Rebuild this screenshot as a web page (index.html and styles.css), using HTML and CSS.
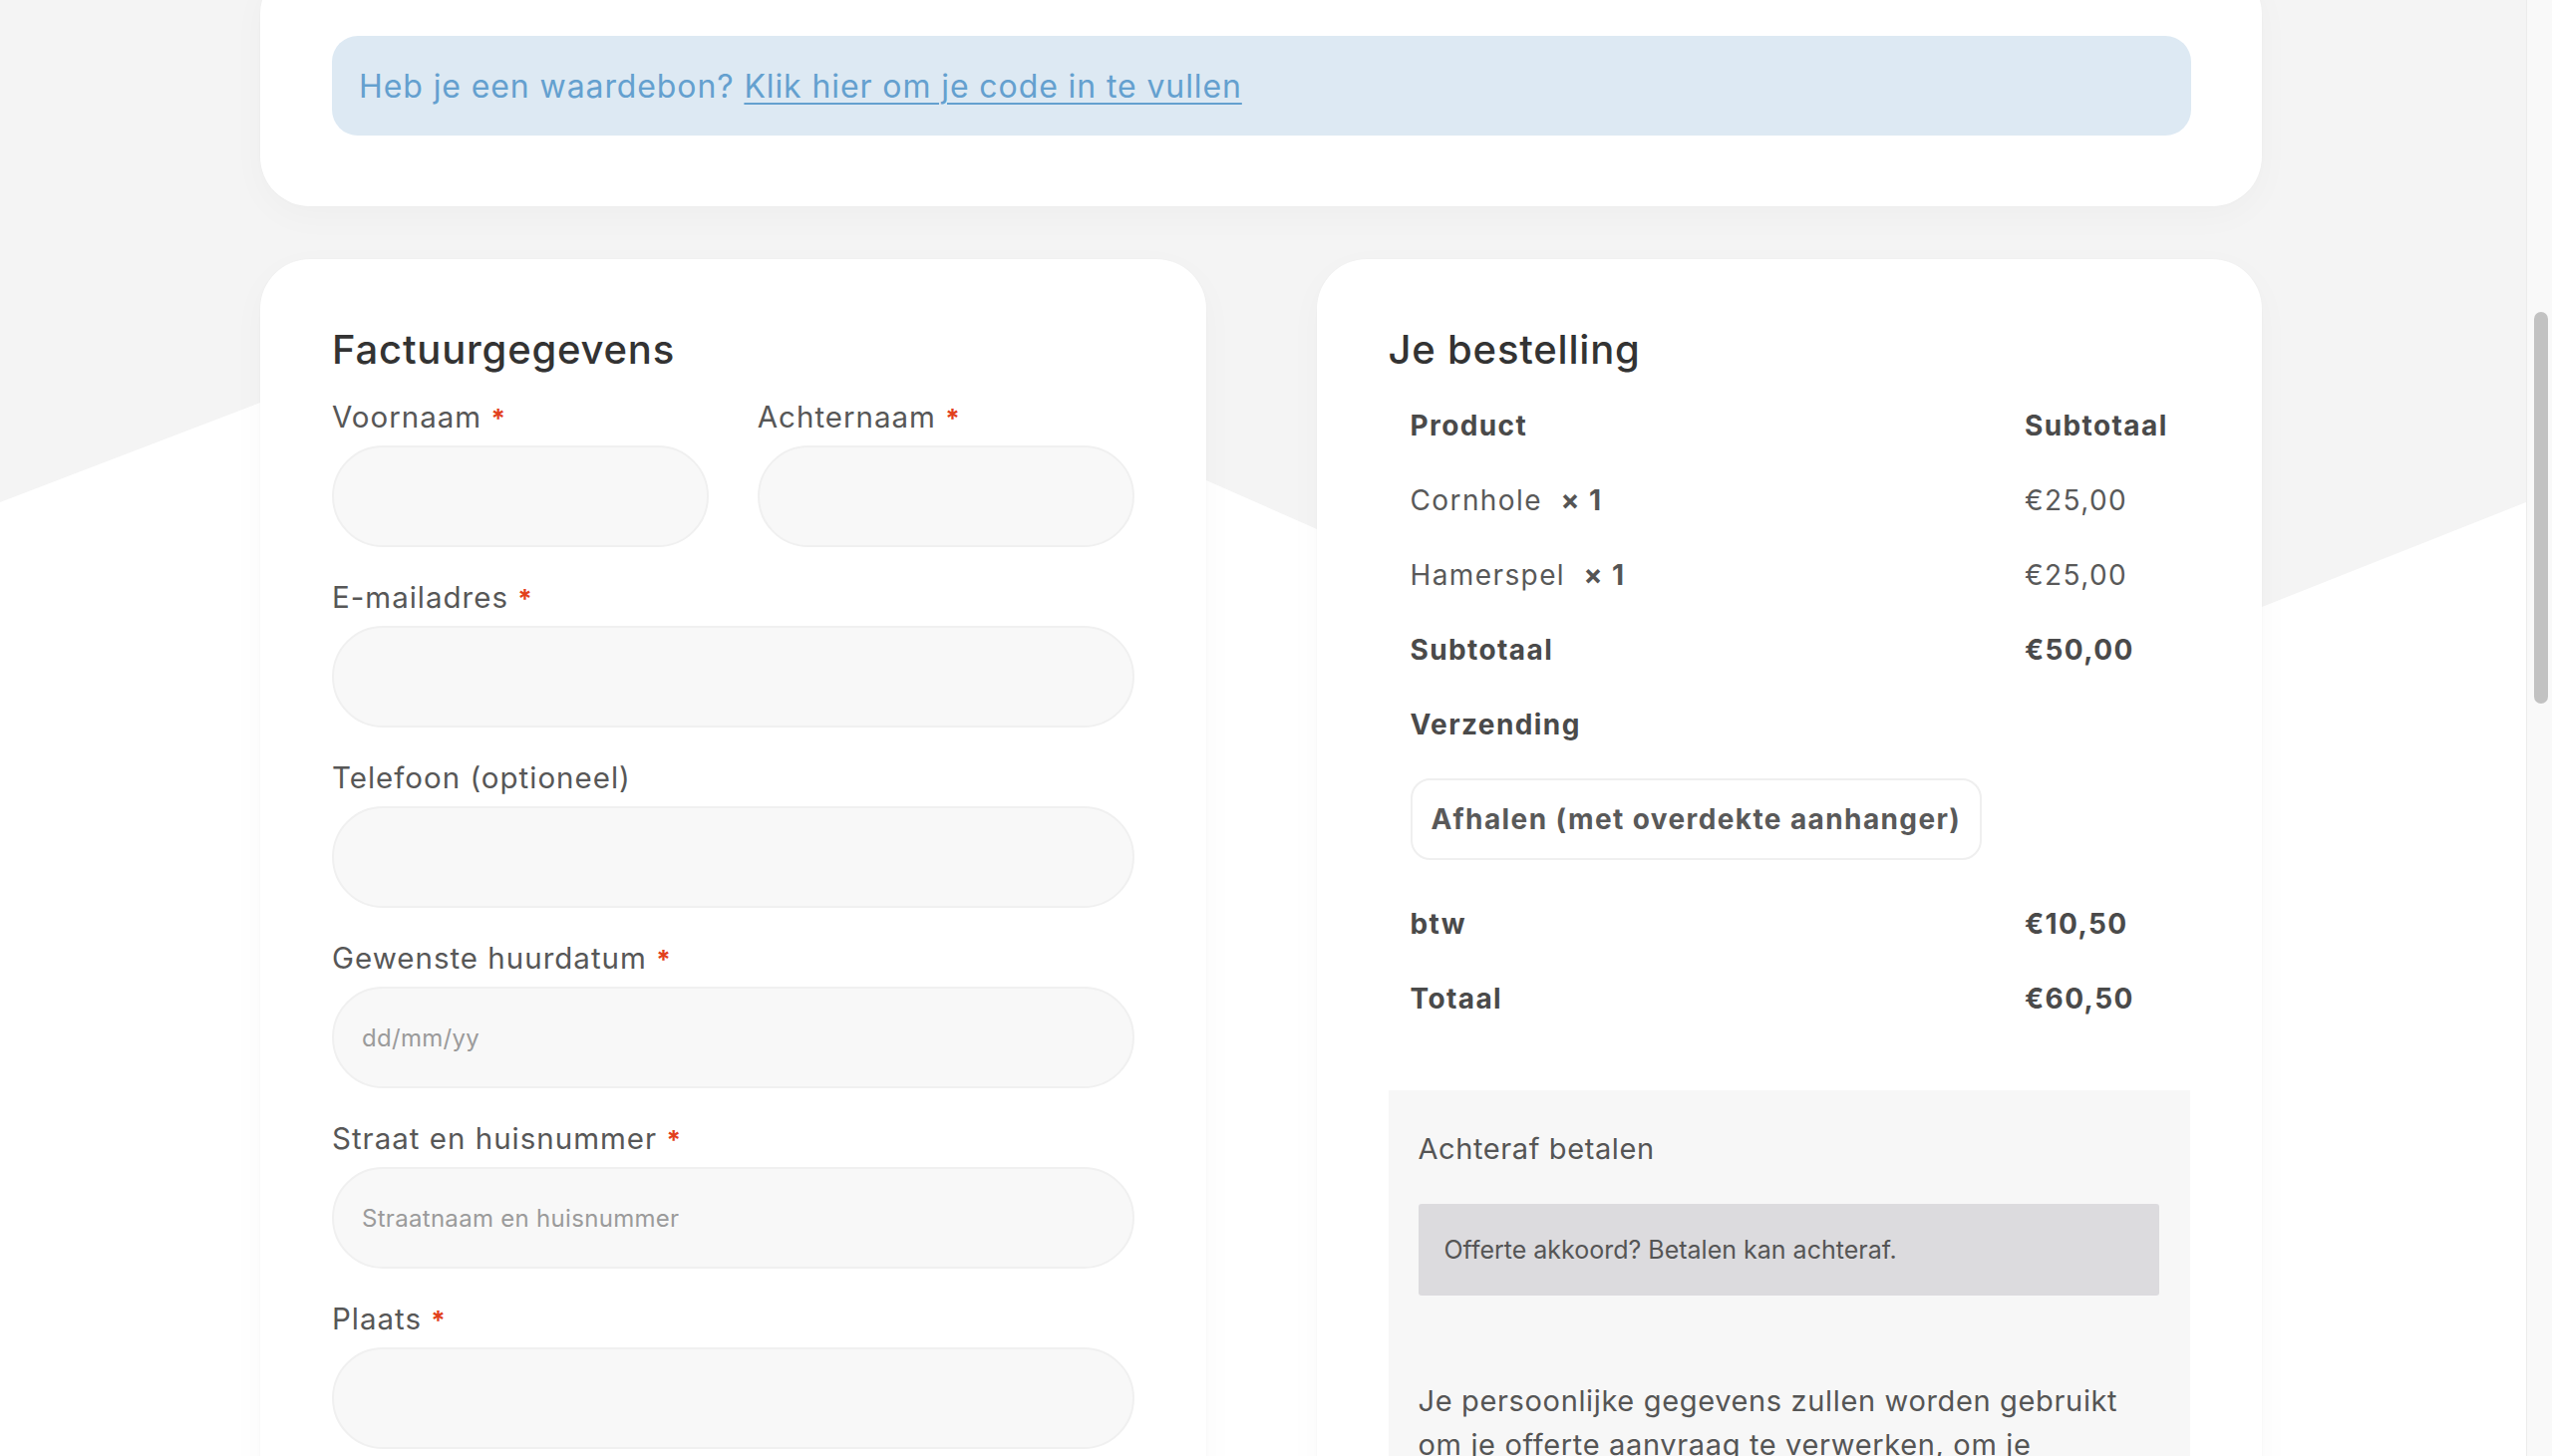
FILE: index.html
```html
<!DOCTYPE html>
<html lang="nl">
<head>
<meta charset="utf-8">
<title>Afrekenen</title>
<link rel="stylesheet" href="styles.css">
</head>
<body>
<div class="viewport">
  <div class="page">
    <svg class="wave" viewBox="0 0 2534 1461" preserveAspectRatio="none" aria-hidden="true">
      <path d="M0,504 L261,404 C480,320 560,270 680,280 C820,290 1000,370 1210,482 L1321,531 C1550,632 1750,760 1870,740 C2000,720 2150,660 2269,609 L2534,504 V1461 H0 Z" fill="#ffffff"/>
    </svg>
    <div class="container">
      <section class="card coupon-card">
        <div class="notice">Heb je een waardebon? <a href="#" class="notice-link">Klik hier om je code in te vullen</a></div>
      </section>

      <div class="columns">
        <section class="card billing">
          <h3 class="card-title">Factuurgegevens</h3>
          <div class="row-2">
            <div class="field">
              <label class="label">Voornaam <abbr class="req">*</abbr></label>
              <input class="input" type="text">
            </div>
            <div class="field">
              <label class="label">Achternaam <abbr class="req">*</abbr></label>
              <input class="input" type="text">
            </div>
          </div>
          <div class="field">
            <label class="label">E-mailadres <abbr class="req">*</abbr></label>
            <input class="input" type="text">
          </div>
          <div class="field">
            <label class="label">Telefoon (optioneel)</label>
            <input class="input" type="text">
          </div>
          <div class="field">
            <label class="label">Gewenste huurdatum <abbr class="req">*</abbr></label>
            <input class="input" type="text" placeholder="dd/mm/yy">
          </div>
          <div class="field">
            <label class="label">Straat en huisnummer <abbr class="req">*</abbr></label>
            <input class="input" type="text" placeholder="Straatnaam en huisnummer">
          </div>
          <div class="field">
            <label class="label">Plaats <abbr class="req">*</abbr></label>
            <input class="input" type="text">
          </div>
        </section>

        <section class="card order">
          <h3 class="card-title">Je bestelling</h3>
          <table class="order-table">
            <thead>
              <tr><th class="col-name">Product</th><th class="col-total">Subtotaal</th></tr>
            </thead>
            <tbody>
              <tr><td>Cornhole&nbsp; <strong class="qty">×&nbsp;1</strong></td><td>€25,00</td></tr>
              <tr><td>Hamerspel&nbsp; <strong class="qty">×&nbsp;1</strong></td><td>€25,00</td></tr>
            </tbody>
            <tfoot>
              <tr><th>Subtotaal</th><td class="strong">€50,00</td></tr>
              <tr><th colspan="2">Verzending</th></tr>
              <tr class="ship-row"><td colspan="2"><span class="ship-box">Afhalen (met overdekte aanhanger)</span></td></tr>
              <tr><th>btw</th><td class="strong">€10,50</td></tr>
              <tr><th>Totaal</th><td class="strong">€60,50</td></tr>
            </tfoot>
          </table>

          <div class="payment">
            <div class="pay-title">Achteraf betalen</div>
            <div class="pay-box">Offerte akkoord? Betalen kan achteraf.</div>
            <p class="privacy">Je persoonlijke gegevens zullen worden gebruikt om je offerte aanvraag te verwerken, om je ervaring op deze website te ondersteunen en voor andere doeleinden zoals beschreven in ons privacybeleid.</p>
          </div>
        </section>
      </div>
    </div>
  </div>
  <div class="scrollbar"><div class="thumb"></div></div>
</div>
</body>
</html>
```

FILE: styles.css
```css
* { box-sizing: border-box; }

html, body {
  margin: 0;
  padding: 0;
  height: 100%;
  overflow: hidden;
}

body {
  font-family: Inter, "Open Sans", sans-serif;
  color: #555;
  background: #f4f4f4;
}

.viewport {
  display: flex;
  height: 100vh;
  overflow: hidden;
}

.page {
  flex: 1;
  position: relative;
  overflow: hidden;
  padding-right: 4px;
}

.wave {
  position: absolute;
  left: 0;
  top: 0;
  width: 2534px;
  height: 1461px;
  z-index: 0;
}

.container {
  position: relative;
  z-index: 1;
  width: 2008px;
  margin: -36px auto 0;
}

.card {
  background: #fff;
  border-radius: 50px;
  padding: 72px;
  box-shadow: 0 0 0 1px rgba(0,0,0,0.012), 0 10px 36px rgba(0,0,0,0.028);
}

.coupon-card { padding: 72px 71px 71px 72px; }

.notice {
  background: #dde9f3;
  border-radius: 26px;
  height: 100px;
  padding: 0 27px;
  display: flex;
  align-items: center;
  font-size: 32px;
  letter-spacing: 0.9px;
  color: #64a0cf;
  white-space: pre;
}

.notice-link {
  color: #64a0cf;
  text-decoration: underline;
  text-underline-offset: 5px;
  text-decoration-thickness: 2px;
}

.columns {
  margin-top: 53px;
  display: grid;
  grid-template-columns: 1fr 1fr;
  column-gap: 111px;
  align-items: start;
}

.billing { min-height: 1400px; }
.order { min-height: 1400px; }

.card-title {
  margin: 0;
  font-size: 40px;
  line-height: 38px;
  letter-spacing: 0.8px;
  font-weight: 500;
  color: #333;
}

.billing .card-title { margin-bottom: 28px; }

.row-2 {
  display: grid;
  grid-template-columns: 1fr 1fr;
  column-gap: 49px;
}

.field { margin-bottom: 30px; }

.label {
  display: block;
  height: 40px;
  font-size: 29.5px;
  letter-spacing: 1px;
  line-height: 40px;
  color: #575757;
  margin-bottom: 9px;
  white-space: nowrap;
}

.req {
  color: #e2401c;
  text-decoration: none;
  font-weight: 700;
  font-size: 26px;
  line-height: 1;
  vertical-align: baseline;
}

.input {
  display: block;
  width: 100%;
  height: 102px;
  border: 2px solid #f0f0f0;
  background: #f8f8f8;
  border-radius: 51px;
  padding: 0 28px;
  font-family: inherit;
  font-size: 24px;
  letter-spacing: 0.3px;
  color: #555;
  outline: none;
}

.input::placeholder { color: #9b9b9b; }

.order-table {
  width: 100%;
  border-collapse: collapse;
  margin-top: 19px;
  font-size: 28px;
  letter-spacing: 1.4px;
  color: #595959;
}

.order-table th,
.order-table td {
  height: 75px;
  padding: 0 22px;
  text-align: left;
  vertical-align: middle;
  white-space: nowrap;
}

.order-table th { font-weight: 700; color: #4a4a4a; }

.col-total { width: 188px; }

.strong { font-weight: 700; color: #4a4a4a; }

.qty { font-weight: 700; color: #555; }

.ship-row td {
  height: auto;
  padding-top: 17px;
  padding-bottom: 26px;
}

.ship-box {
  display: inline-block;
  border: 2px solid #efefef;
  border-radius: 20px;
  padding: 19px 19px;
  font-weight: 700;
  font-size: 28px;
  letter-spacing: 1.4px;
  line-height: 40px;
  color: #595959;
}

.payment {
  margin-top: 55px;
  background: #f7f7f7;
  padding: 37px 31px 40px 30px;
  min-height: 400px;
}

.pay-title {
  font-size: 29px;
  letter-spacing: 0.6px;
  line-height: 44px;
  color: #555;
}

.pay-box {
  margin-top: 33px;
  background: #dcdbde;
  border-radius: 3px;
  height: 92px;
  padding: 0 26px;
  display: flex;
  align-items: center;
  font-size: 25px;
  color: #555;
}

.privacy {
  margin: 84px 20px 0 0;
  font-size: 29px;
  letter-spacing: 0.65px;
  line-height: 44px;
  color: #555;
}

.scrollbar {
  width: 26px;
  flex: none;
  background: #f9f9f9;
  border-left: 1px solid #ececec;
  padding-top: 313px;
  padding-left: 7px;
}

.thumb {
  width: 14px;
  height: 393px;
  border-radius: 7px;
  background: #c2c2c2;
}
```
